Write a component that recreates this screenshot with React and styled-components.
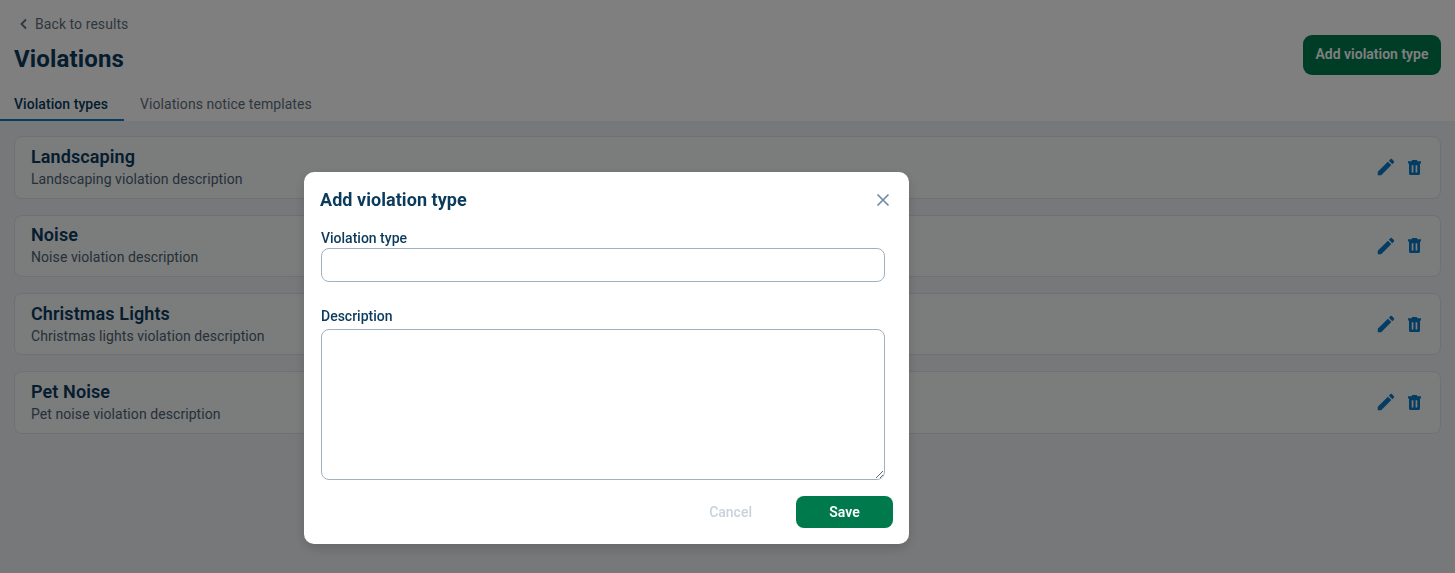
import React from "react";
import styled, { createGlobalStyle } from "styled-components";

const GlobalStyle = createGlobalStyle`
  * {
    box-sizing: border-box;
  }
  html, body {
    margin: 0;
    padding: 0;
    background: #ffffff;
    font-family: Roboto, "Liberation Sans", sans-serif;
  }
`;

const violations = [
  { name: "Landscaping", description: "Landscaping violation description" },
  { name: "Noise", description: "Noise violation description" },
  { name: "Christmas Lights", description: "Christmas lights violation description" },
  { name: "Pet Noise", description: "Pet noise violation description" },
];

function EditIcon() {
  return (
    <svg width="22" height="22" viewBox="0 0 24 24" fill="#0b78c4">
      <path d="M3 17.25V21h3.75L17.81 9.94l-3.75-3.75L3 17.25zM20.71 7.04c.39-.39.39-1.02 0-1.41l-2.34-2.34c-.39-.39-1.02-.39-1.41 0l-1.83 1.83 3.75 3.75 1.83-1.83z" />
    </svg>
  );
}

function TrashIcon() {
  return (
    <svg width="13" height="15" viewBox="0 0 13 15" fill="#0b78c4">
      <path
        fillRule="evenodd"
        d="M0 1.3h3.5L4.2 0h4.6l.7 1.3H13V3.400h-1v10.100c0 .8-.7 1.500-1.500 1.500h-8C1.700 15 1 14.300 1 13.500V3.400H0V1.300zM3.700 5.200v7.300h1.700V5.200H3.700zm3.900 0v7.300h1.700V5.200H7.600z"
      />
    </svg>
  );
}

export default function App() {
  return (
    <>
      <GlobalStyle />
      <Page>
        <Header>
          <HeaderLeft>
            <BackLink>
              <svg width="16" height="16" viewBox="0 0 16 16" fill="none" stroke="#5f6f7c" strokeWidth="1.8">
                <path d="M10 3.500 5.500 8l4.500 4.500" />
              </svg>
              Back to results
            </BackLink>
            <Title>Violations</Title>
          </HeaderLeft>
          <AddButton>Add violation type</AddButton>
        </Header>
        <Tabs>
          <Tab $active>Violation types</Tab>
          <Tab>Violations notice templates</Tab>
        </Tabs>
        <Content>
          {violations.map((item) => (
            <Card key={item.name}>
              <div>
                <CardTitle>{item.name}</CardTitle>
                <CardText>{item.description}</CardText>
              </div>
              <CardActions>
                <EditIcon />
                <TrashIcon />
              </CardActions>
            </Card>
          ))}
        </Content>
      </Page>
      <Overlay />
      <Modal>
        <ModalHeader>
          <ModalTitle>Add violation type</ModalTitle>
          <CloseIcon width="24" height="24" viewBox="0 0 24 24" fill="none" stroke="#6f8ba3" strokeWidth="1.7">
            <path d="M6.500 6.500l11 11M17.500 6.500l-11 11" />
          </CloseIcon>
        </ModalHeader>
        <Field>
          <Label>Violation type</Label>
          <TextInput />
        </Field>
        <Field>
          <Label>Description</Label>
          <TextArea />
        </Field>
        <ModalFooter>
          <CancelButton>Cancel</CancelButton>
          <SaveButton>Save</SaveButton>
        </ModalFooter>
      </Modal>
    </>
  );
}

const Page = styled.div`
  height: 573px;
  overflow: hidden;
  display: flex;
  flex-direction: column;
  background: #edf0f3;
`;
const Header = styled.div`
  height: 93px;
  padding: 14px 14px 0;
  display: flex;
  justify-content: space-between;
  background: #ffffff;
`;
const HeaderLeft = styled.div`
  display: flex;
  flex-direction: column;
`;
const BackLink = styled.div`
  display: flex;
  align-items: center;
  gap: 3px;
  height: 20px;
  padding-left: 2px;
  font-size: 14px;
  letter-spacing: 0.07px;
  color: #5f6f7c;
`;
const Title = styled.h1`
  margin: 7px 0 0;
  font-size: 24px;
  line-height: 36px;
  font-weight: 700;
  letter-spacing: 0.15px;
  color: #0a3a5c;
`;
const AddButton = styled.button`
  width: 138px;
  height: 40px;
  margin-top: 21px;
  padding: 0 0 2px;
  border: none;
  border-radius: 9px;
  background: #007a4d;
  color: #ffffff;
  font-family: inherit;
  font-size: 14px;
  font-weight: 600;
`;
const Tabs = styled.div`
  height: 28px;
  display: flex;
  background: #ffffff;
`;
const Tab = styled.div`
  padding: 0 16px 0 ${(p) => (p.$active ? "14px" : "16px")};
  font-size: 14px;
  line-height: 22px;
  letter-spacing: 0.06px;
  font-weight: ${(p) => (p.$active ? 500 : 400)};
  color: ${(p) => (p.$active ? "#0a3a5c" : "#5f6f7c")};
  border-bottom: 2px solid ${(p) => (p.$active ? "#0b78c4" : "transparent")};
`;
const Content = styled.div`
  flex: 1;
  padding: 15.3px 14px 15px;
  display: flex;
  flex-direction: column;
  gap: 16px;
`;
const Card = styled.div`
  height: 62.33px;
  padding: 0 19px 0 16px;
  display: flex;
  align-items: center;
  justify-content: space-between;
  background: #f7f8f9;
  border: 1px solid #dde2e7;
  border-radius: 8px;
`;
const CardTitle = styled.div`
  font-size: 18px;
  line-height: 22px;
  font-weight: 600;
  letter-spacing: 0.1px;
  color: #0a3a5c;
`;
const CardText = styled.div`
  margin-top: 1px;
  font-size: 14px;
  line-height: 20px;
  letter-spacing: 0.07px;
  color: #4b6273;
`;
const CardActions = styled.div`
  display: flex;
  align-items: center;
  gap: 11px;
`;
const Overlay = styled.div`
  position: fixed;
  inset: 0;
  background: rgba(0, 0, 0, 0.5);
`;
const Modal = styled.div`
  position: fixed;
  left: 304px;
  top: 172px;
  width: 605px;
  height: 372px;
  padding: 16px;
  display: flex;
  flex-direction: column;
  background: #ffffff;
  border-radius: 10px;
  box-shadow: 0 4px 12px rgba(0, 0, 0, 0.15);
`;
const ModalHeader = styled.div`
  height: 24px;
  display: flex;
  align-items: center;
  justify-content: space-between;
`;
const CloseIcon = styled.svg`
  margin-right: -2px;
`;
const ModalTitle = styled.h2`
  margin: -2px 0 0;
  font-size: 18px;
  font-weight: 700;
  letter-spacing: 0.05px;
  color: #0a3a5c;
`;
const Field = styled.label`
  display: flex;
  flex-direction: column;
  margin: 0 8px 0 1px;
  padding-top: 17px;
  & + & {
    padding-top: 25px;
  }
`;
const Label = styled.span`
  font-size: 14px;
  line-height: 18px;
  font-weight: 500;
  color: #0a3a5c;
  margin-bottom: 1px;
`;
const TextInput = styled.input`
  height: 34px;
  border: 1px solid #9fb1c1;
  border-radius: 8px;
  background: #ffffff;
  outline: none;
`;
const TextArea = styled.textarea`
  height: 151px;
  margin-top: 3px;
  border: 1px solid #9fb1c1;
  border-radius: 8px;
  background: #ffffff;
  outline: none;
  resize: vertical;
  display: block;
`;
const ModalFooter = styled.div`
  margin-top: 16px;
  display: flex;
  justify-content: flex-end;
  align-items: center;
  gap: 44px;
`;
const CancelButton = styled.button`
  padding: 0;
  border: none;
  background: none;
  font-family: inherit;
  font-size: 14px;
  font-weight: 500;
  color: #c9d2da;
`;
const SaveButton = styled.button`
  width: 97px;
  height: 32px;
  border: none;
  border-radius: 8px;
  background: #007a4d;
  color: #ffffff;
  font-family: inherit;
  font-size: 14px;
  font-weight: 600;
`;
